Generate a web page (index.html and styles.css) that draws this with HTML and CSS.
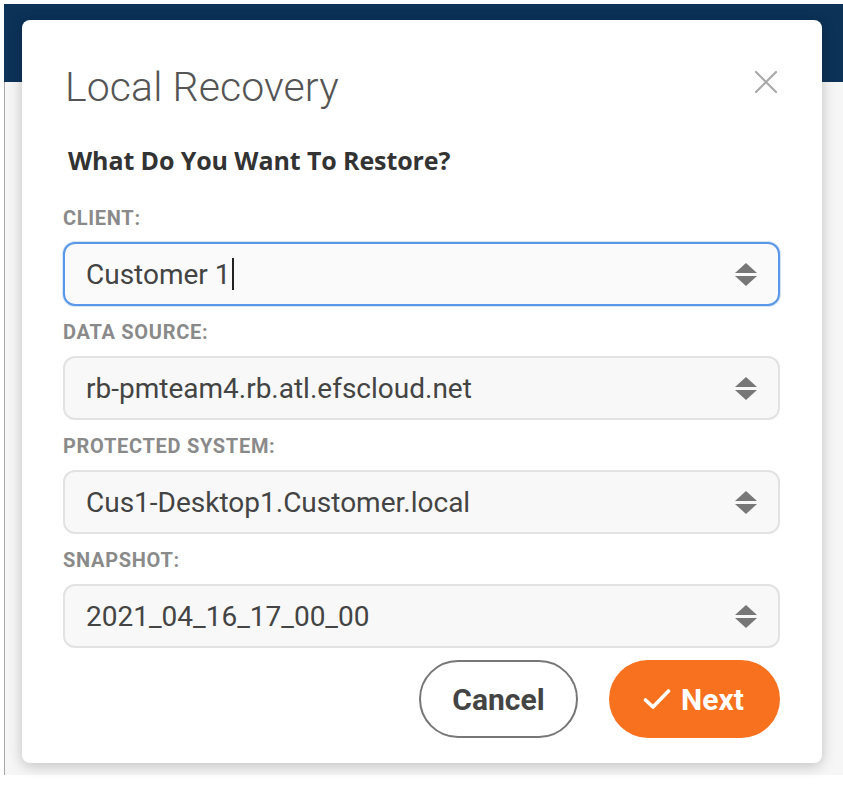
FILE: index.html
```html
<!DOCTYPE html>
<html lang="en">
<head>
  <meta charset="UTF-8">
  <title>Local Recovery</title>
  <link rel="stylesheet" href="styles.css">
</head>
<body>
  <div class="app">
    <div class="topbar"></div>
    <div class="content"></div>
  </div>

  <div class="modal">
    <div class="modal-header">
      <h1>Local Recovery</h1>
      <svg class="close" width="24" height="24" viewBox="0 0 24 24"><path d="M2 2 L22 22 M22 2 L2 22" stroke="#a9a9a9" stroke-width="2.2" stroke-linecap="round"/></svg>
    </div>

    <h2>What Do You Want To Restore?</h2>

    <div class="form">
      <div class="field">
        <label>CLIENT:</label>
        <div class="select focus">
          <span class="value">Customer 1<span class="caret"></span></span>
          <span class="sort"><i class="up"></i><i class="down"></i></span>
        </div>
      </div>

      <div class="field">
        <label>DATA SOURCE:</label>
        <div class="select">
          <span class="value">rb-pmteam4.rb.atl.efscloud.net</span>
          <span class="sort"><i class="up"></i><i class="down"></i></span>
        </div>
      </div>

      <div class="field">
        <label>PROTECTED SYSTEM:</label>
        <div class="select">
          <span class="value">Cus1-Desktop1.Customer.local</span>
          <span class="sort"><i class="up"></i><i class="down"></i></span>
        </div>
      </div>

      <div class="field">
        <label>SNAPSHOT:</label>
        <div class="select">
          <span class="value">2021_04_16_17_00_00</span>
          <span class="sort"><i class="up"></i><i class="down"></i></span>
        </div>
      </div>
    </div>

    <div class="actions">
      <button class="btn-cancel">Cancel</button>
      <button class="btn-next">
        <svg width="28" height="22" viewBox="0 0 28 22"><path d="M2.5 12 L10 19 L25.5 3" fill="none" stroke="#fff" stroke-width="3.6" stroke-linecap="round" stroke-linejoin="round"/></svg>
        Next
      </button>
    </div>
  </div>
</body>
</html>
```

FILE: styles.css
```css
body {
  margin: 0;
  background-color: #ffffff;
  font-family: Roboto, 'Liberation Sans', sans-serif;
  width: 843px;
  height: 786px;
  overflow: hidden;
}

.app {
  padding-top: 4px;
  padding-left: 4px;
  height: 771px;
  display: flex;
  flex-direction: column;
}

.topbar {
  height: 78px;
  background-color: #0c3258;
}

.content {
  flex: 1;
  background-color: #f6f6f7;
  border-left: 1px solid #a9a9a9;
}

.modal {
  position: absolute;
  left: 22px;
  top: 20px;
  width: 800px;
  box-sizing: border-box;
  padding: 43px 42px 25px 43px;
  background-color: #ffffff;
  border-radius: 8px;
  box-shadow: 0 3px 14px rgba(0, 0, 0, 0.22);
}

.modal-header {
  display: flex;
  align-items: center;
  justify-content: space-between;
  height: 48px;
}

h1 {
  margin: 0;
  font-size: 41px;
  font-weight: 300;
  color: #555555;
  line-height: 48px;
  letter-spacing: 0.1px;
}

.close {
  margin-right: 2px;
  margin-top: -10px;
}

h2 {
  margin: 34px 0 0 3px;
  font-family: 'Open Sans', Roboto, sans-serif;
  font-size: 25px;
  font-weight: 700;
  color: #333333;
  line-height: 30px;
  letter-spacing: -0.1px;
}

.form {
  margin-top: 33px;
  margin-left: -2px;
  display: flex;
  flex-direction: column;
  gap: 16px;
}

.field {
  display: flex;
  flex-direction: column;
}

label {
  font-size: 20px;
  font-weight: 700;
  color: #8a8a8a;
  line-height: 20px;
  margin-bottom: 14px;
  letter-spacing: 0.7px;
}

.select {
  height: 64px;
  box-sizing: border-box;
  border: 2px solid #e2e2e2;
  border-radius: 12px;
  background-color: #f8f8f8;
  display: flex;
  align-items: center;
  justify-content: space-between;
  padding: 0 21px 0 21px;
}

.select.focus {
  border-color: #5a97e6;
  background-color: #fafafa;
  box-shadow: 0 0 0 1px rgba(90, 151, 230, 0.25);
}

.value {
  font-size: 28px;
  color: #444444;
  display: flex;
  align-items: center;
}

.caret {
  display: inline-block;
  width: 2px;
  height: 32px;
  background-color: #222222;
  margin-left: 1px;
}

.sort {
  display: flex;
  flex-direction: column;
  gap: 3px;
}

.sort i {
  width: 0;
  height: 0;
  border-left: 11px solid transparent;
  border-right: 11px solid transparent;
}

.sort .up {
  border-bottom: 10px solid #777777;
}

.sort .down {
  border-top: 10px solid #777777;
}

.actions {
  margin-top: 12px;
  display: flex;
  justify-content: flex-end;
  gap: 31px;
}

.actions button {
  height: 78px;
  border-radius: 39px;
  font-family: Roboto, 'Liberation Sans', sans-serif;
  font-size: 30px;
  font-weight: 700;
  cursor: pointer;
  display: flex;
  align-items: center;
  justify-content: center;
}

.btn-cancel {
  width: 159px;
  background-color: #ffffff;
  border: 2px solid #777777;
  color: #444444;
}

.btn-next {
  width: 171px;
  background-color: #f7711f;
  border: none;
  color: #ffffff;
  gap: 10px;
  padding-left: 4px;
}
```
